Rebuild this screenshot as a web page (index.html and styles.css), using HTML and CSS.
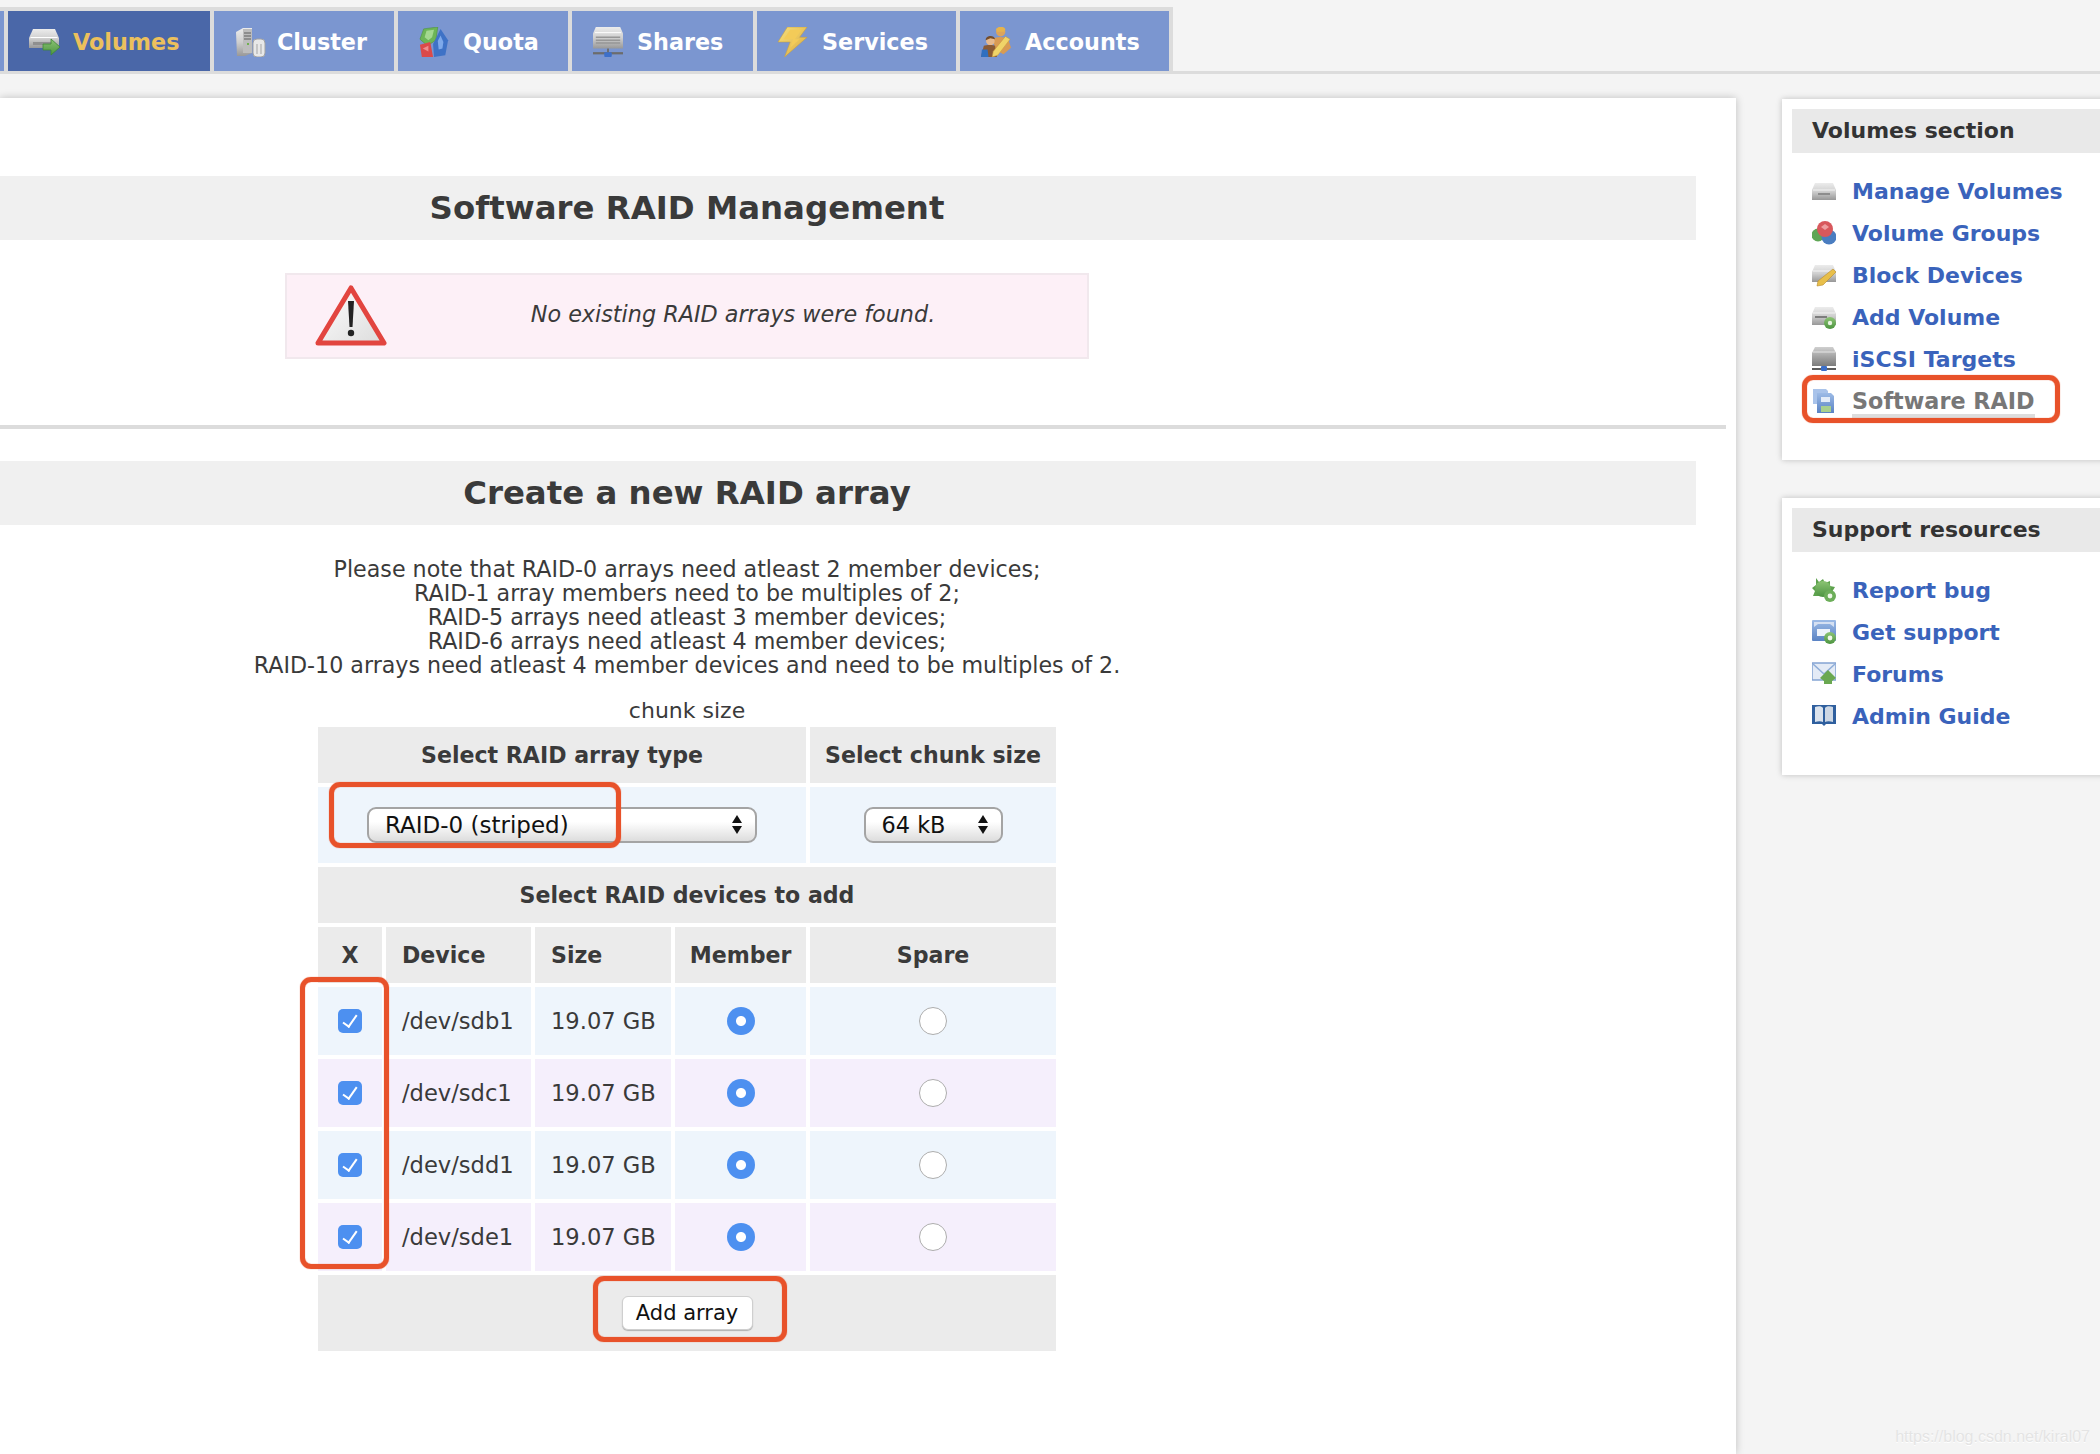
FILE: index.html
```html
<!DOCTYPE html>
<html lang="en">
<head>
<meta charset="utf-8">
<title>Software RAID Management</title>
<link rel="stylesheet" href="styles.css">
</head>
<body>
<svg class="defs" aria-hidden="true">
  <defs>
    <linearGradient id="gDrive" x1="0" y1="0" x2="0" y2="1"><stop offset="0" stop-color="#ececec"/><stop offset=".5" stop-color="#cfcfcf"/><stop offset="1" stop-color="#989898"/></linearGradient>
    <linearGradient id="gDark" x1="0" y1="0" x2="0" y2="1"><stop offset="0" stop-color="#cfcfcf"/><stop offset=".5" stop-color="#a4a4a4"/><stop offset="1" stop-color="#7c7c7c"/></linearGradient>
    <linearGradient id="gGreen" x1="0" y1="0" x2="0" y2="1"><stop offset="0" stop-color="#8cc474"/><stop offset="1" stop-color="#4c9440"/></linearGradient>
    <linearGradient id="gBolt" x1="0" y1="0" x2="1" y2="1"><stop offset="0" stop-color="#f6e07e"/><stop offset="1" stop-color="#dcaa3c"/></linearGradient>
    <linearGradient id="gBlue" x1="0" y1="0" x2="0" y2="1"><stop offset="0" stop-color="#9dbbe6"/><stop offset="1" stop-color="#5a83c4"/></linearGradient>
    <linearGradient id="gTri" x1="0" y1="0" x2="1" y2="1"><stop offset="0" stop-color="#ffffff"/><stop offset="1" stop-color="#dcdcdc"/></linearGradient>

    <symbol id="t-volumes" viewBox="0 0 32 28">
      <path d="M5 1h22l4 9v10H1V10z" fill="url(#gDrive)"/>
      <path d="M3 9h26l1 1H2z" fill="#fff"/>
      <rect x="5" y="14" width="20" height="3" fill="#8f8f8f"/>
      <path d="M15 16h8v-5l9 8-9 8v-5h-8z" fill="url(#gGreen)" stroke="#3f8a35" stroke-width=".8"/>
    </symbol>
    <symbol id="t-cluster" viewBox="0 0 32 30">
      <path d="M2 5l7-4h9v25l-7 3H3z" fill="url(#gDrive)"/>
      <path d="M9 2h9v24H9z" fill="#bdbdbd"/>
      <path d="M10 6h7M10 9h7M10 12h7" stroke="#7e7e7e" stroke-width="1.4"/>
      <rect x="13" y="16" width="2" height="2" fill="#6fb04f"/>
      <rect x="19" y="12" width="12" height="18" rx="4" fill="#e8e8e8" stroke="#a2a2a2"/>
      <path d="M23 17v10M27 17v10" stroke="#b9b9b9" stroke-width="1.4"/>
    </symbol>
    <symbol id="t-quota" viewBox="0 0 32 32">
      <path d="M1 13L5 2l15-2-2 14L9 20z" fill="#6db556" stroke="#4b9239" stroke-width=".6"/>
      <path d="M6 11l2-7 8-1-2 8-4 3z" fill="#a4d88f"/>
      <path d="M1 19l11-3 3 16H3z" fill="#db4a4a"/>
      <path d="M4 23l6-3v6z" fill="#ee8d8d"/>
      <path d="M23 2l8 12-3 16-12 2-1-14z" fill="#3e72c6"/>
      <path d="M23 9l3 7-1 7-4 1-1-9z" fill="#7ea9ea"/>
    </symbol>
    <symbol id="t-shares" viewBox="0 0 32 32">
      <path d="M3 0h26l3 7v16H0V7z" fill="url(#gDrive)"/>
      <path d="M2 6h28" stroke="#fff" stroke-width="1"/>
      <path d="M3 11h26M3 14h26M3 17h26" stroke="#979797" stroke-width="1.6"/>
      <path d="M0 28h32" stroke="#6c6c6c" stroke-width="2.4"/>
      <rect x="15" y="23" width="2" height="4" fill="#6c6c6c"/>
      <rect x="12" y="27" width="8" height="5" rx="1" fill="#3d6fc9"/>
    </symbol>
    <symbol id="t-services" viewBox="0 0 32 32">
      <path d="M10 0h21l-8 11h8L7 32l6-16H0z" fill="url(#gBolt)" stroke="#c9a03e" stroke-width=".6"/>
      <path d="M13 3h12l-7 10h5L13 22l3-9H6z" fill="#f3cb58"/>
    </symbol>
    <symbol id="t-accounts" viewBox="0 0 32 32">
      <circle cx="21" cy="5" r="5" fill="#dca45c"/>
      <path d="M16 2c3-3 8-3 10 0l-1 3h-8z" fill="#e6b34c"/>
      <path d="M13 13c2-3 13-3 16 0l3 9-8 7-9-5z" fill="#d99b53"/>
      <circle cx="10" cy="15" r="4.6" fill="#e6b98d"/>
      <path d="M5 14c0-5 9-6 10-1l-5-1z" fill="#764d2a"/>
      <path d="M3 20c2-1 11-1 12 0l2 12H0z" fill="#8a5a34"/>
      <path d="M1 24h6l1 8H0z" fill="#2f6fc0"/>
      <path d="M26 10l5 3-13 17-6 2 1-6z" fill="#f0d468" stroke="#c79a3e" stroke-width=".6"/>
    </symbol>

    <symbol id="s-manage" viewBox="0 0 24 24">
      <path d="M3 4h18l3 7v10H0V11z" fill="url(#gDrive)"/>
      <path d="M1 11h22" stroke="#f4f4f4"/>
      <rect x="6" y="14" width="12" height="2" fill="#8d8d8d"/>
    </symbol>
    <symbol id="s-groups" viewBox="0 0 24 24">
      <circle cx="6" cy="14" r="6.500" fill="#5fa655"/>
      <circle cx="17" cy="16" r="7.500" fill="#4a7dc0"/>
      <circle cx="13" cy="8" r="8" fill="#d8585c"/>
      <path d="M9 6l4-3 4 3-4 3z" fill="#ee9ea0"/>
    </symbol>
    <symbol id="s-block" viewBox="0 0 24 24">
      <path d="M3 2h18l3 7v10H0V9z" fill="url(#gDrive)"/>
      <path d="M1 8h22" stroke="#f4f4f4"/>
      <path d="M21 6l3 3L11 22l-6 1 1-5z" fill="#e8bf4a" stroke="#b98b2e" stroke-width=".6"/>
    </symbol>
    <symbol id="s-add" viewBox="0 0 24 24">
      <path d="M3 2h18l3 7v11H0V9z" fill="url(#gDrive)"/>
      <path d="M1 8h22" stroke="#f4f4f4"/>
      <rect x="3" y="11" width="12" height="2" fill="#7d7d7d"/>
      <circle cx="18" cy="18" r="6" fill="url(#gGreen)"/>
      <circle cx="18" cy="18" r="2.2" fill="#e8f4e2"/>
    </symbol>
    <symbol id="s-iscsi" viewBox="0 0 24 24">
      <path d="M3 0h18l3 6v13H0V6z" fill="url(#gDark)"/>
      <path d="M1 5h22" stroke="#e4e4e4"/>
      <path d="M0 22h24" stroke="#5c5c5c" stroke-width="2"/>
      <rect x="9" y="19" width="6" height="5" rx="1" fill="#3d6fc9"/>
    </symbol>
    <symbol id="s-raid" viewBox="0 0 24 24">
      <path d="M1 0h13l2 2v13H1z" fill="#a9c3ea"/>
      <path d="M5 4h14l3 3v17H5z" fill="url(#gBlue)"/>
      <rect x="9" y="8" width="9" height="5" fill="#e4ecf8"/>
      <rect x="9" y="17" width="10" height="6" fill="#a9d08e"/>
    </symbol>
    <symbol id="s-bug" viewBox="0 0 24 24">
      <path d="M4 0l3 4 4-3 2 4 5-2v5l5 1-3 5 3 4H1l2-5-3-3 4-3z" fill="#5da24d"/>
      <circle cx="11" cy="11" r="8" fill="url(#gGreen)"/>
      <circle cx="18" cy="18" r="6" fill="#6cae59"/>
      <circle cx="18" cy="18" r="2.4" fill="#eef6e8"/>
    </symbol>
    <symbol id="s-support" viewBox="0 0 24 24">
      <rect x="0" y="0" width="24" height="21" rx="1" fill="url(#gBlue)"/>
      <path d="M2 2h20v5l-4-3H6L2 7z" fill="#d5e0f2"/>
      <rect x="5" y="9" width="13" height="7" fill="#eef3fb"/>
      <circle cx="18" cy="18" r="6" fill="url(#gGreen)"/>
      <circle cx="18" cy="18" r="2.4" fill="#eef6e8"/>
    </symbol>
    <symbol id="s-forums" viewBox="0 0 24 24">
      <rect x="0" y="1" width="24" height="17" fill="#e4ebf6" stroke="#7d9ed0" stroke-width="1.4"/>
      <path d="M1 2l11 10L23 2" fill="none" stroke="#8fadd8" stroke-width="1.6"/>
      <path d="M8 16l8-8 8 8-4 3v3h-8v-3z" fill="#6aa851"/>
    </symbol>
    <symbol id="s-guide" viewBox="0 0 24 24">
      <path d="M0 1h24v19H14l-2 2-2-2H0z" fill="#2f5f9e"/>
      <path d="M3 3c3-1 7-1 8 1v14c-2-1-5-1-8 0z" fill="#dbe3ed"/>
      <path d="M21 3c-3-1-7-1-8 1v14c2-1 5-1 8 0z" fill="#cdd7e4"/>
    </symbol>
  </defs>
</svg>

<nav class="tabs">
  <span class="tab-stub"></span>
  <a class="tab tab-active tab-w1" href="#"><svg class="tab-icon"><use href="#t-volumes"/></svg><span>Volumes</span></a>
  <a class="tab tab-w2" href="#"><svg class="tab-icon"><use href="#t-cluster"/></svg><span>Cluster</span></a>
  <a class="tab tab-w3" href="#"><svg class="tab-icon"><use href="#t-quota"/></svg><span>Quota</span></a>
  <a class="tab tab-w4" href="#"><svg class="tab-icon"><use href="#t-shares"/></svg><span>Shares</span></a>
  <a class="tab tab-w5" href="#"><svg class="tab-icon"><use href="#t-services"/></svg><span>Services</span></a>
  <a class="tab tab-w6" href="#"><svg class="tab-icon"><use href="#t-accounts"/></svg><span>Accounts</span></a>
</nav>

<div class="layout">
  <main class="main">
    <h2 class="title">Software RAID Management</h2>
    <div class="warning">
      <svg class="warn-icon" viewBox="0 0 72 62">
        <path d="M36 4L69 59H3z" fill="url(#gTri)" stroke="#e2453f" stroke-width="5" stroke-linejoin="round"/>
        <path d="M33 17h6l-1.500 26h-3z" fill="#222"/>
        <circle cx="36" cy="49" r="3.200" fill="#222"/>
      </svg>
      <em class="warn-text">No existing RAID arrays were found.</em>
    </div>
    <hr class="rule">
    <h2 class="title">Create a new RAID array</h2>
    <p class="note">Please note that RAID-0 arrays need atleast 2 member devices;<br>RAID-1 array members need to be multiples of 2;<br>RAID-5 arrays need atleast 3 member devices;<br>RAID-6 arrays need atleast 4 member devices;<br>RAID-10 arrays need atleast 4 member devices and need to be multiples of 2.</p>

    <table class="raid">
      <caption>chunk size</caption>
      <colgroup>
        <col class="c-x"><col class="c-dev"><col class="c-size"><col class="c-mem"><col class="c-spare">
      </colgroup>
      <tr class="r-head"><th colspan="4">Select RAID array type</th><th>Select chunk size</th></tr>
      <tr class="r-select blue">
        <td colspan="4"><span class="sel sel-type"><select><option>RAID-0 (striped)</option></select></span></td>
        <td><span class="sel sel-chunk"><select><option>64 kB</option></select></span></td>
      </tr>
      <tr class="r-head"><th colspan="5">Select RAID devices to add</th></tr>
      <tr class="r-head">
        <th>X</th><th class="left">Device</th><th class="left">Size</th><th>Member</th><th>Spare</th>
      </tr>
      <tr class="r-dev blue">
        <td><input class="chk" type="checkbox" checked></td><td class="left">/dev/sdb1</td><td class="left">19.07 GB</td>
        <td><input class="rad" type="radio" name="sdb" checked></td><td><input class="rad" type="radio" name="sdb"></td>
      </tr>
      <tr class="r-dev purple">
        <td><input class="chk" type="checkbox" checked></td><td class="left">/dev/sdc1</td><td class="left">19.07 GB</td>
        <td><input class="rad" type="radio" name="sdc" checked></td><td><input class="rad" type="radio" name="sdc"></td>
      </tr>
      <tr class="r-dev blue">
        <td><input class="chk" type="checkbox" checked></td><td class="left">/dev/sdd1</td><td class="left">19.07 GB</td>
        <td><input class="rad" type="radio" name="sdd" checked></td><td><input class="rad" type="radio" name="sdd"></td>
      </tr>
      <tr class="r-dev purple">
        <td><input class="chk" type="checkbox" checked></td><td class="left">/dev/sde1</td><td class="left">19.07 GB</td>
        <td><input class="rad" type="radio" name="sde" checked></td><td><input class="rad" type="radio" name="sde"></td>
      </tr>
      <tr class="r-foot"><th colspan="5"><button class="add" type="button">Add array</button></th></tr>
    </table>

    <span class="ring ring-select"></span>
    <span class="ring ring-checks"></span>
    <span class="ring ring-add"></span>
  </main>

  <aside class="side">
    <section class="box">
      <h3 class="box-title">Volumes section</h3>
      <ul class="links">
        <li><svg class="link-icon"><use href="#s-manage"/></svg><a href="#">Manage Volumes</a></li>
        <li><svg class="link-icon"><use href="#s-groups"/></svg><a href="#">Volume Groups</a></li>
        <li><svg class="link-icon"><use href="#s-block"/></svg><a href="#">Block Devices</a></li>
        <li><svg class="link-icon"><use href="#s-add"/></svg><a href="#">Add Volume</a></li>
        <li><svg class="link-icon"><use href="#s-iscsi"/></svg><a href="#">iSCSI Targets</a></li>
        <li><svg class="link-icon"><use href="#s-raid"/></svg><a class="current" href="#">Software RAID</a></li>
      </ul>
      <span class="ring ring-side"></span>
    </section>
    <section class="box">
      <h3 class="box-title">Support resources</h3>
      <ul class="links">
        <li><svg class="link-icon"><use href="#s-bug"/></svg><a href="#">Report bug</a></li>
        <li><svg class="link-icon"><use href="#s-support"/></svg><a href="#">Get support</a></li>
        <li><svg class="link-icon"><use href="#s-forums"/></svg><a href="#">Forums</a></li>
        <li><svg class="link-icon"><use href="#s-guide"/></svg><a href="#">Admin Guide</a></li>
      </ul>
    </section>
  </aside>
</div>
<div class="watermark">https://blog.csdn.net/kiral07</div>
</body>
</html>
```
FILE: styles.css
```css
html, body {
  margin: 0;
  padding: 0;
}
body {
  position: relative;
  width: 2100px;
  height: 1454px;
  padding-top: 0.1px;
  overflow: hidden;
  background: #f4f4f4;
  color: #3a3a3a;
  font-family: "DejaVu Sans", Verdana, sans-serif;
  font-size: 22px;
}
.defs {
  position: absolute;
  width: 0;
  height: 0;
}

/* tabs */
.tabs {
  display: flex;
  height: 67px;
  margin-top: 7px;
  box-sizing: border-box;
  border-bottom: 3px solid #dcdcdc;
  font-weight: 700;
  font-size: 22.300px;
}
.tab-stub {
  width: 4px;
  height: 60px;
  margin: 4px 0 0;
  background: #7b96d0;
  border-right: 4px solid #dcdcdc;
  box-shadow: 0 -4px 0 #dcdcdc;
}
.tab {
  display: flex;
  align-items: center;
  gap: 13px;
  box-sizing: border-box;
  height: 60px;
  margin: 4px 4px 0 0;
  padding: 1px 0 0 20px;
  background: #7b96d0;
  color: #fff;
  text-decoration: none;
  box-shadow: 0 -4px 0 #dcdcdc, 4px -4px 0 #dcdcdc, 4px 0 0 #dcdcdc;
}
.tab-w1 { width: 202px; }
.tab-w2 { width: 180px; gap: 11px; }
.tab-w3 { width: 170px; }
.tab-w4 { width: 181px; }
.tab-w5 { width: 199px; }
.tab-w6 { width: 209px; }
.tab-active {
  background: #4a67a8;
  color: #ecc05c;
}
.tab-icon {
  flex: none;
  width: 32px;
  height: 30px;
  filter: blur(.5px);
}

/* layout */
.layout {
  display: flex;
  height: 1380px;
}
.main {
  position: relative;
  flex: none;
  box-sizing: border-box;
  width: 1736px;
  margin-top: 24px;
  padding-top: 78px;
  background: #fff;
  box-shadow: 0 0 8px rgba(0, 0, 0, .22);
}
.title {
  box-sizing: border-box;
  width: 1696px;
  height: 64px;
  margin: 0;
  padding-right: 322px;
  background: #f0f0f0;
  text-align: center;
  font-size: 32.400px;
  line-height: 65px;
  font-weight: 700;
}
.warning {
  display: flex;
  align-items: center;
  box-sizing: border-box;
  width: 804px;
  height: 86px;
  margin: 33px 0 0 285px;
  padding: 0 28px;
  background: #fdf0f7;
  border: 2px solid #f1e8ed;
}
.warn-icon {
  flex: none;
  width: 72px;
  height: 62px;
  margin-top: -3px;
  filter: blur(.4px);
}
.warn-text {
  flex: 1;
  padding: 0 0 5px 20px;
  text-align: center;
  font-size: 22.300px;
}
.rule {
  width: 1726px;
  height: 4px;
  margin: 66px 0 32px;
  border: 0;
  background: #dcdcdc;
}
.note {
  width: 1374px;
  margin: 32px 0 22px;
  text-align: center;
  line-height: 24px;
  font-size: 22.200px;
}

/* raid table */
.raid {
  table-layout: fixed;
  width: 746px;
  margin-left: 314px;
  border-collapse: separate;
  border-spacing: 4px;
  font-size: 22px;
}
.raid caption {
  height: 24px;
  line-height: 24px;
  text-align: center;
}
.c-x { width: 64px; }
.c-dev { width: 145px; }
.c-size { width: 136px; }
.c-mem { width: 131px; }
.c-spare { width: 246px; }
.raid th, .raid td {
  padding: 0;
  text-align: center;
  vertical-align: middle;
}
.raid th {
  background: #ebebeb;
  font-weight: 700;
  font-size: 22.100px;
}
.raid td {
  font-size: 22.600px;
}
.raid .left {
  padding-left: 16px;
  text-align: left;
}
.r-head { height: 56px; }
.r-select { height: 76px; }
.r-dev { height: 68px; }
.r-foot { height: 76px; }
.blue td { background: #eef5fc; }
.purple td { background: #f5effc; }

.sel {
  position: relative;
  display: inline-block;
  vertical-align: middle;
}
.sel::before, .sel::after {
  content: "";
  position: absolute;
  right: 15px;
  border-left: 5px solid transparent;
  border-right: 5px solid transparent;
}
.sel::before {
  top: 8px;
  border-bottom: 8px solid #111;
}
.sel::after {
  bottom: 9px;
  border-top: 8px solid #111;
}
.sel select {
  display: block;
  box-sizing: border-box;
  height: 36px;
  padding: 0 0 0 16px;
  appearance: none;
  border: 2px solid #a4a4a4;
  border-radius: 9px;
  background: linear-gradient(#fff 40%, #dddddd);
  color: #111;
  font-family: "DejaVu Sans", Verdana, sans-serif;
}
.sel-type select { width: 390px; font-size: 23px; }
.sel-chunk select { width: 139px; font-size: 22.400px; }

.chk, .rad {
  display: block;
  margin: 0 auto;
  appearance: none;
}
.chk {
  position: relative;
  width: 24px;
  height: 24px;
  border-radius: 5px;
  background: #4d90f0;
}
.chk::after {
  content: "";
  position: absolute;
  left: 8px;
  top: 3px;
  width: 6px;
  height: 13px;
  border: solid #fff;
  border-width: 0 2px 2px 0;
  transform: rotate(35deg);
}
.rad {
  box-sizing: border-box;
  width: 28px;
  height: 28px;
  border-radius: 50%;
  border: 1.500px solid #adadad;
  background: #fff;
}
.rad:checked {
  border: 0;
  background: radial-gradient(circle, #fff 4.500px, #4d90f0 5.500px);
}
.add {
  display: block;
  box-sizing: border-box;
  width: 131px;
  height: 34px;
  margin: 0 auto;
  padding: 0;
  background: #fff;
  border: 1px solid #cfcfcf;
  border-radius: 6px;
  box-shadow: 0 1px 1px rgba(0, 0, 0, .25);
  color: #111;
  font: 21px "DejaVu Sans", Verdana, sans-serif;
}

/* sidebar */
.side {
  flex: none;
  display: flex;
  flex-direction: column;
  gap: 38px;
  width: 328px;
  margin: 25px 0 0 46px;
}
.box {
  position: relative;
  padding: 10px 0 38px 10px;
  margin-right: -10px;
  background: #fff;
  box-shadow: 0 0 6px rgba(0, 0, 0, .22);
}
.box-title {
  height: 44px;
  margin: 0 0 17px;
  padding-left: 20px;
  background: #e9e9e9;
  line-height: 44px;
  font-size: 22px;
  font-weight: 700;
  color: #333;
}
.links {
  margin: 0;
  padding: 0 0 0 20px;
  list-style: none;
}
.links li {
  display: flex;
  align-items: center;
  gap: 16px;
  height: 42px;
}
.link-icon {
  flex: none;
  width: 24px;
  height: 24px;
  filter: blur(.5px);
}
.links a {
  color: #3a63bb;
  font-size: 22px;
  font-weight: 700;
  text-decoration: none;
}
.links .current {
  color: #777;
  border-bottom: 4px solid #ddd;
  line-height: 25px;
  margin-top: 4px;
  font-size: 22.300px;
}

/* red annotation rings */
.ring {
  position: absolute;
  box-sizing: border-box;
  border: 5px solid #e8522a;
  border-radius: 11px;
  box-shadow: 0 0 1px #e8522a, inset 0 0 1px #e8522a;
}
.ring-select { left: 329px; top: 684px; width: 292px; height: 66px; }
.ring-checks { left: 300px; top: 879px; width: 89px; height: 292px; }
.ring-add { left: 593px; top: 1178px; width: 194px; height: 66px; }
.ring-side { left: 20px; top: 276px; width: 258px; height: 48px; }

.watermark {
  position: absolute;
  right: 10px;
  bottom: 8px;
  color: #e4e4e4;
  font-family: "Liberation Sans", Arial, sans-serif;
  font-size: 16px;
  text-shadow: 0 1px 0 #fff;
}
```
